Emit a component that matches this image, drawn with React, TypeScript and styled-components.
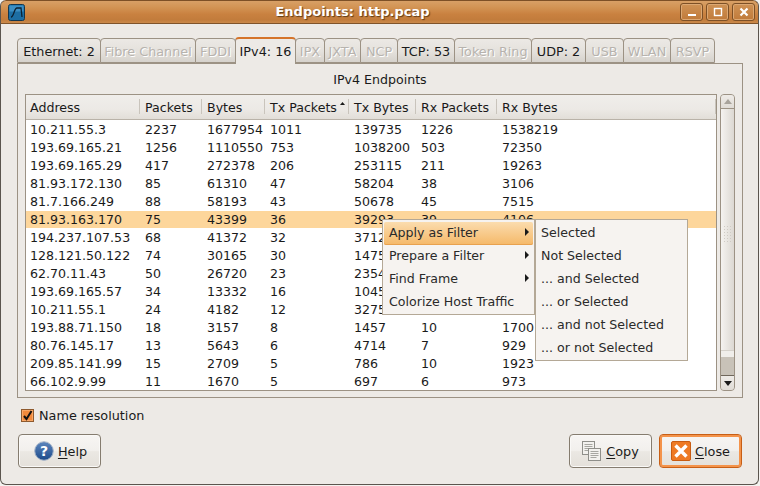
import React from "react";
import styled, { createGlobalStyle } from "styled-components";

const Global = createGlobalStyle`
  html, body { margin: 0; padding: 0; background: #f4f2ef; }
  body { font-family: "DejaVu Sans", sans-serif; font-size: 12.8px; color: #1a1a1a; }
  * { box-sizing: border-box; }
`;

const Window = styled.div`
  position: relative;
  width: 759px;
  height: 485px;
  display: flex;
  flex-direction: column;
  overflow: hidden;
  background: #edeae6;
  border-radius: 6px 6px 6px 6px;
  border: 1px solid #5b554e;
  border-top: none;
`;

const TitleBar = styled.div`
  height: 24px;
  flex: none;
  display: flex;
  align-items: center;
  position: relative;
  margin: 0 -1px;
  padding: 0 3px 0 7px;
  border-radius: 6px 6px 0 0;
  border: 1px solid #7d5026;
  border-bottom: 1px solid #80542a;
  background: linear-gradient(#d8a066 0%, #d29353 30%, #c98140 60%, #c27c3c 85%, #cb8a4b 100%);
`;

const TitleText = styled.div`
  position: absolute;
  left: 0;
  right: 54px;
  top: 3px;
  text-align: center;
  font-weight: bold;
  font-size: 13px;
  line-height: 16px;
  color: #fff;
  text-shadow: 1px 1px 1px #5f3b17;
`;

const WinButtons = styled.div`
  margin-left: auto;
  display: flex;
  gap: 3px;
  position: relative;
`;

const WinButton = styled.div`
  width: 23px;
  height: 18px;
  display: flex;
  align-items: center;
  justify-content: center;
  border: 1px solid #7d5026;
  border-radius: 3px;
  box-shadow: inset 0 0 0 1px #dca873;
  background: linear-gradient(#cf9255, #c07a3a);
`;

const Body = styled.div`
  flex: 1;
  display: flex;
  flex-direction: column;
  padding: 12px 15px 0 16px;
`;

const TabStrip = styled.div`
  display: flex;
  align-items: flex-end;
  height: 27px;
  flex: none;
  position: relative;
  z-index: 1;
`;

const Tab = styled.div<{ $active?: boolean; $off?: boolean; $w: number }>`
  width: ${(p) => p.$w}px;
  height: ${(p) => (p.$active ? 27 : 25)}px;
  margin-bottom: ${(p) => (p.$active ? -1 : 0)}px;
  flex: none;
  display: flex;
  align-items: center;
  justify-content: center;
  padding-top: ${(p) => (p.$active ? 0 : 1)}px;
  white-space: nowrap;
  font-size: 12.8px;
  border: 1px solid #9c9284;
  border-bottom: ${(p) => (p.$active ? "none" : "1px solid #9c9284")};
  border-radius: 4px 4px 0 0;
  margin-right: -1px;
  color: ${(p) => (p.$off ? "#b7b3ae" : "#1a1a1a")};
  text-shadow: ${(p) => (p.$off ? "1px 1px 0 #fff" : "none")};
  background: ${(p) => (p.$active ? "#edeae6" : "linear-gradient(#ece9e5 0%, #e4e1dc 55%, #d6d2cc 100%)")};
  ${(p) => (p.$active ? "border-top: 2px solid #d5742a;" : "")}
`;

const Panel = styled.div`
  height: 335px;
  width: 726px;
  flex: none;
  border: 1px solid #9c9284;
  padding: 0 0 0 7px;
  display: flex;
  flex-direction: column;
`;

const PanelTitle = styled.div`
  height: 30px;
  flex: none;
  line-height: 31px;
  text-align: center;
  font-size: 12.6px;
  margin-left: -7px;
`;

const ListRow = styled.div`
  display: flex;
  gap: 3px;
  height: 297px;
  flex: none;
`;

const TreeFrame = styled.div`
  width: 692px;
  height: 297px;
  flex: none;
  border: 1px solid #9c9284;
  background: #fff;
  display: flex;
  flex-direction: column;
`;

const cols = "114px 62px 63px 84px 67px 81px 1fr";

const Header = styled.div`
  height: 25px;
  flex: none;
  display: grid;
  grid-template-columns: ${cols};
  background: linear-gradient(#f0eeeb 0%, #ece9e5 60%, #e2ded8 100%);
  border-bottom: 1px solid #b9b2a8;
`;

const HeadCell = styled.div`
  position: relative;
  display: flex;
  align-items: center;
  padding: 0 0 0 5px;
  font-size: 12.6px;
  &:first-child { padding-left: 4px; }
  &::after {
    content: "";
    position: absolute;
    right: 0;
    top: 4px;
    bottom: 5px;
    width: 1px;
    background: #c9c4bc;
  }
`;

const SortMark = styled.svg`
  position: absolute;
  right: 4px;
  top: 7px;
`;

const Rows = styled.div`
  flex: 1;
  padding-top: 1px;
  overflow: hidden;
`;

const Row = styled.div<{ $sel?: boolean }>`
  height: 17px;
  margin-bottom: 1px;
  display: grid;
  grid-template-columns: ${cols};
  background: ${(p) => (p.$sel ? "#fdd69b" : "#fff")};
`;

const Cell = styled.div`
  padding-left: 5px;
  font-size: 12.6px;
  line-height: 17px;
  white-space: nowrap;
  overflow: hidden;
  color: #1a1a1a;
  &:first-child { padding-left: 4px; }
`;

const Scrollbar = styled.div`
  width: 15px;
  height: 297px;
  flex: none;
  border: 1px solid #9c9284;
  border-radius: 4px;
  background: #c8c2b8;
  display: flex;
  flex-direction: column;
  overflow: hidden;
`;

const ScrollButton = styled.div<{ $h: number }>`
  height: ${(p) => p.$h}px;
  flex: none;
  display: flex;
  align-items: center;
  justify-content: center;
  background: linear-gradient(#eeebe7, #e0dcd6);
`;

const Thumb = styled.div`
  flex: 1;
  border-top: 1px solid #9c9284;
  border-bottom: 1px solid #d5d1ca;
  background: linear-gradient(90deg, #f5f3f0, #e6e3de 60%, #dcd8d2);
  display: flex;
  align-items: center;
  justify-content: center;
  padding-top: 8px;
`;

const TrackEdge = styled.div`
  height: 6px;
  flex: none;
  background: #f0eeea;
`;

const TrackLower = styled.div`
  height: 19px;
  flex: none;
  background: #c8c2b8;
  border-bottom: 1px solid #6f675b;
`;

const Grip = styled.div`
  width: 9px;
  height: 18px;
  background-image: radial-gradient(#cfcbc4 0.6px, transparent 0.8px);
  background-size: 3px 3px;
`;

const CheckRow = styled.div`
  display: flex;
  align-items: center;
  gap: 5px;
  margin: 9px 0 0 4px;
  height: 16px;
  font-size: 12.8px;
`;

const CheckBox = styled.div`
  width: 13px;
  height: 13px;
  flex: none;
  margin-top: 1px;
  border: 1px solid #8e5a2e;
  background: #f28a3c;
  box-shadow: inset 0 0 0 1px #f9a766;
  display: flex;
  align-items: center;
  justify-content: center;
`;

const ButtonBar = styled.div`
  display: flex;
  align-items: center;
  margin: 11px 0 0 1px;
  width: 724px;
  height: 34px;
`;

const Button = styled.div<{ $focus?: boolean; $w: number; $pl?: number }>`
  width: ${(p) => p.$w}px;
  height: 34px;
  display: flex;
  align-items: center;
  justify-content: center;
  gap: 4px;
  padding-left: ${(p) => p.$pl ?? 0}px;
  font-size: 12.8px;
  border-radius: 4px;
  border: 1px solid ${(p) => (p.$focus ? "#c75f16" : "#857c6f")};
  background: linear-gradient(#f7f5f3 0%, #f2f0ed 48%, #ebe8e3 52%, #e4e0da 100%);
  ${(p) => (p.$focus ? "box-shadow: inset 0 0 0 2px #f4934a;" : "box-shadow: inset 0 0 0 1px #faf9f7;")}
`;

const Spacer = styled.div`
  flex: 1;
`;

const ButtonGap = styled.div`
  width: 7px;
`;

const Under = styled.span`
  text-decoration: underline;
  text-underline-offset: 2px;
`;

const Menu = styled.div<{ $x: number; $y: number; $h: number }>`
  position: absolute;
  left: ${(p) => p.$x}px;
  top: ${(p) => p.$y}px;
  width: 153px;
  height: ${(p) => p.$h}px;
  background: #f6f3f0;
  border: 1px solid #b4a896;
  padding: 2px 1px;
  display: flex;
  flex-direction: column;
  z-index: 5;
`;

const MenuItem = styled.div<{ $hot?: boolean; $pad?: number }>`
  position: relative;
  height: 23px;
  flex: none;
  display: flex;
  align-items: center;
  padding: 0 0 2px ${(p) => p.$pad ?? 5}px;
  font-size: 12.6px;
  white-space: nowrap;
  color: #2a2a2a;
  border-radius: 2px;
  ${(p) =>
    p.$hot
      ? "background: linear-gradient(#fbdcae, #f5b868); box-shadow: inset 0 -1px 0 #e8a14e;"
      : ""}
`;

const Arrow = styled.span`
  position: absolute;
  right: 4px;
  top: 6px;
  width: 0;
  height: 0;
  border-left: 4px solid #1a1a1a;
  border-top: 4px solid transparent;
  border-bottom: 4px solid transparent;
`;

const rows = [
  ["10.211.55.3", "2237", "1677954", "1011", "139735", "1226", "1538219"],
  ["193.69.165.21", "1256", "1110550", "753", "1038200", "503", "72350"],
  ["193.69.165.29", "417", "272378", "206", "253115", "211", "19263"],
  ["81.93.172.130", "85", "61310", "47", "58204", "38", "3106"],
  ["81.7.166.249", "88", "58193", "43", "50678", "45", "7515"],
  ["81.93.163.170", "75", "43399", "36", "39293", "39", "4106"],
  ["194.237.107.53", "68", "41372", "32", "37126", "36", "4246"],
  ["128.121.50.122", "74", "30165", "30", "14750", "44", "15415"],
  ["62.70.11.43", "50", "26720", "23", "23545", "27", "3175"],
  ["193.69.165.57", "34", "13332", "16", "10454", "18", "2878"],
  ["10.211.55.1", "24", "4182", "12", "3275", "12", "907"],
  ["193.88.71.150", "18", "3157", "8", "1457", "10", "1700"],
  ["80.76.145.17", "13", "5643", "6", "4714", "7", "929"],
  ["209.85.141.99", "15", "2709", "5", "786", "10", "1923"],
  ["66.102.9.99", "11", "1670", "5", "697", "6", "973"],
];

const tabs: [string, number, boolean][] = [
  ["Ethernet: 2", 84, false],
  ["Fibre Channel", 96, true],
  ["FDDI", 41, true],
  ["IPv4: 16", 61, false],
  ["IPX", 30, true],
  ["JXTA", 37, true],
  ["NCP", 38, true],
  ["TCP: 53", 58, false],
  ["Token Ring", 78, true],
  ["UDP: 2", 55, false],
  ["USB", 39, true],
  ["WLAN", 48, true],
  ["RSVP", 45, true],
];

const AppIcon = () => (
  <svg width="17" height="17" viewBox="0 0 17 17">
    <rect x="0.5" y="0.5" width="16" height="16" rx="2" fill="#1d6ea3" stroke="#12364f" />
    <rect x="1.5" y="1.5" width="14" height="6" fill="#3c8fc4" />
    <path d="M3 13 C6 13 6 4 9 4 L13 4 L14 13" fill="none" stroke="#0c2233" strokeWidth="1.3" />
  </svg>
);

const HelpIcon = () => (
  <svg width="20" height="20" viewBox="0 0 20 20">
    <defs>
      <linearGradient id="hg" x1="0" y1="0" x2="0" y2="1">
        <stop offset="0" stopColor="#5d86bd" />
        <stop offset="1" stopColor="#1c4a8a" />
      </linearGradient>
    </defs>
    <circle cx="10" cy="10" r="9.3" fill="url(#hg)" stroke="#a9b6c8" strokeWidth="1" />
    <text x="10" y="15" textAnchor="middle" fontFamily="DejaVu Sans" fontWeight="bold" fontSize="14" fill="#fff">?</text>
  </svg>
);

const CopyIcon = () => (
  <svg width="20" height="20" viewBox="0 0 20 20">
    <rect x="0.5" y="0.5" width="12" height="13" fill="#f2f1ee" stroke="#8f8f8a" />
    <path d="M2.5 3.5h8M2.5 5.5h8M2.5 7.5h8M2.5 9.5h6" stroke="#a6a6a1" />
    <rect x="6.5" y="7.5" width="12" height="12" fill="#f2f1ee" stroke="#8f8f8a" />
    <path d="M8.5 10.5h8M8.5 12.5h8M8.5 14.5h8M8.5 16.5h6" stroke="#a6a6a1" />
  </svg>
);

const CloseIcon = () => (
  <svg width="20" height="20" viewBox="0 0 20 20">
    <rect x="0.5" y="0.5" width="19" height="19" rx="1.5" fill="#ee7a24" stroke="#c85c12" />
    <path d="M4.5 4.5 L15.5 15.5 M15.5 4.5 L4.5 15.5" stroke="#fff" strokeWidth="3.4" />
  </svg>
);

export default function App() {
  return (
    <Window>
      <Global />
      <TitleBar>
        <AppIcon />
        <TitleText>Endpoints: http.pcap</TitleText>
        <WinButtons>
          <WinButton>
            <svg width="10" height="10" viewBox="0 0 10 10"><rect x="1" y="7" width="8" height="2" fill="#fff" /></svg>
          </WinButton>
          <WinButton>
            <svg width="10" height="10" viewBox="0 0 10 10"><rect x="1.5" y="1.5" width="7" height="7" fill="none" stroke="#fff" strokeWidth="1.4" /></svg>
          </WinButton>
          <WinButton>
            <svg width="10" height="10" viewBox="0 0 10 10"><path d="M1.5 1.5 L8.5 8.5 M8.5 1.5 L1.5 8.5" stroke="#fff" strokeWidth="2.2" /></svg>
          </WinButton>
        </WinButtons>
      </TitleBar>
      <Body>
        <TabStrip>
          {tabs.map(([t, w, off]) => (
            <Tab key={t} $w={w} $off={off} $active={t.startsWith("IPv4")}>{t}</Tab>
          ))}
        </TabStrip>
        <Panel>
          <PanelTitle>IPv4 Endpoints</PanelTitle>
          <ListRow>
            <TreeFrame>
              <Header>
                <HeadCell>Address</HeadCell>
                <HeadCell>Packets</HeadCell>
                <HeadCell>Bytes</HeadCell>
                <HeadCell>
                  Tx Packets
                  <SortMark width="5" height="3" viewBox="0 0 5 3"><path d="M0 3 L2.5 0 L5 3 Z" fill="#1a1a1a" /></SortMark>
                </HeadCell>
                <HeadCell>Tx Bytes</HeadCell>
                <HeadCell>Rx Packets</HeadCell>
                <HeadCell>Rx Bytes</HeadCell>
              </Header>
              <Rows>
                {rows.map((r, i) => (
                  <Row key={r[0]} $sel={i === 5}>
                    {r.map((c, j) => <Cell key={j}>{c}</Cell>)}
                  </Row>
                ))}
              </Rows>
            </TreeFrame>
            <Scrollbar>
              <ScrollButton $h={13}>
                <svg width="8" height="5" viewBox="0 0 8 5"><path d="M0 5 L4 0 L8 5 Z" fill="#a8a39b" /></svg>
              </ScrollButton>
              <Thumb><Grip /></Thumb>
              <TrackEdge />
              <TrackLower />
              <ScrollButton $h={14}>
                <svg width="8" height="5" viewBox="0 0 8 5"><path d="M0 0 L4 5 L8 0 Z" fill="#1a1a1a" /></svg>
              </ScrollButton>
            </Scrollbar>
          </ListRow>
        </Panel>
        <CheckRow>
          <CheckBox>
            <svg width="11" height="11" viewBox="0 0 11 11"><path d="M2 6 L4.5 9 L9.5 1" fill="none" stroke="#111" strokeWidth="2" /></svg>
          </CheckBox>
          Name resolution
        </CheckRow>
        <ButtonBar>
          <Button $w={83} $pl={2}><HelpIcon /><span><Under>H</Under>elp</span></Button>
          <Spacer />
          <Button $w={83}><CopyIcon /><span><Under>C</Under>opy</span></Button>
          <ButtonGap />
          <Button $w={83} $focus><CloseIcon /><span><Under>C</Under>lose</span></Button>
        </ButtonBar>
      </Body>
      <Menu $x={381} $y={219} $h={96}>
        <MenuItem $hot>Apply as Filter<Arrow /></MenuItem>
        <MenuItem>Prepare a Filter<Arrow /></MenuItem>
        <MenuItem>Find Frame<Arrow /></MenuItem>
        <MenuItem>Colorize Host Traffic</MenuItem>
      </Menu>
      <Menu $x={534} $y={219} $h={142}>
        <MenuItem $pad={4}>Selected</MenuItem>
        <MenuItem $pad={4}>Not Selected</MenuItem>
        <MenuItem $pad={4}>... and Selected</MenuItem>
        <MenuItem $pad={4}>... or Selected</MenuItem>
        <MenuItem $pad={4}>... and not Selected</MenuItem>
        <MenuItem $pad={4}>... or not Selected</MenuItem>
      </Menu>
    </Window>
  );
}
